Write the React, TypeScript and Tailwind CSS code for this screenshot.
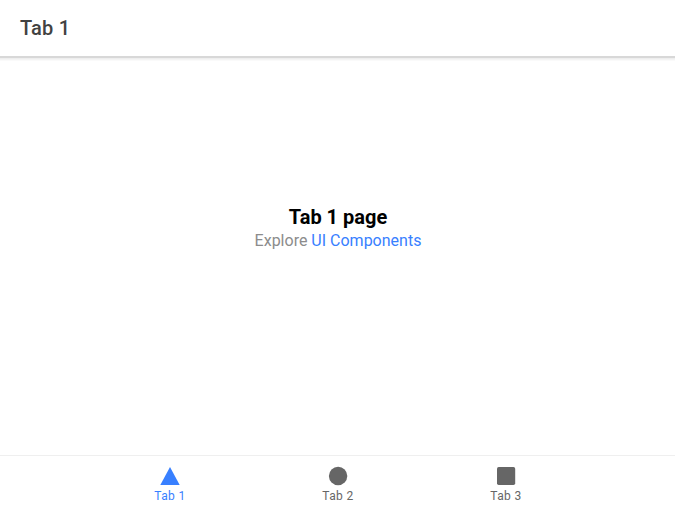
export default function App() {
  const tabs = [
    { label: "Tab 1", color: "text-[#3880ff]", shape: <path d="M10 1 19.7 19H.3Z" /> },
    { label: "Tab 2", color: "text-[#666666]", shape: <circle cx="10.1" cy="10" r="9.2" /> },
    { label: "Tab 3", color: "text-[#666666]", shape: <rect x="1" y="1" width="18.2" height="18" rx="1.7" /> },
  ];
  return (
    <div className="flex h-[510px] w-[675px] flex-col overflow-hidden bg-white font-[Roboto,sans-serif]">
      <header className="z-10 flex h-14 shrink-0 items-center px-5 text-[20px] font-medium tracking-[0.2px] text-[#424242] shadow-[0_2px_0_#d8d8d8,0_3px_0_#eeeeee,0_4px_0_#f4f4f4,0_5px_0_#fafafa]">
        Tab 1
      </header>
      <main className="flex flex-1 flex-col items-center pt-[148px] pl-px">
        <strong className="text-[20px] leading-[26px] font-bold text-black">Tab 1 page</strong>
        <p className="text-[16px] leading-[22px] text-[#8c8c8c]">
          Explore <a className="text-[#3880ff]">UI Components</a>
        </p>
      </main>
      <nav className="flex h-[55px] shrink-0 justify-center border-t border-[#efefef]">
        {tabs.map((t) => (
          <div key={t.label} className={`flex w-[168px] flex-col items-center pt-[10px] ${t.color}`}>
            <svg viewBox="0 0 20 20" className="size-5 fill-current">{t.shape}</svg>
            <span className="mt-[2px] pl-px text-[12px] leading-[16px] tracking-[0.36px]">{t.label}</span>
          </div>
        ))}
      </nav>
    </div>
  );
}
